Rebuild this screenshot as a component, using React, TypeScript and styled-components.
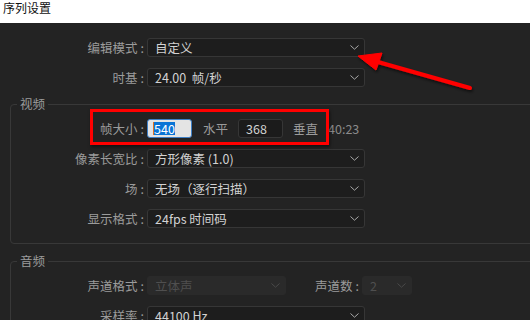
import React from "react";
import styled, { createGlobalStyle } from "styled-components";

const Global = createGlobalStyle`
  html, body {
    margin: 0;
    padding: 0;
    background: #232323;
  }
  body {
    font-family: "Noto Sans CJK SC", "Noto Sans", sans-serif;
  }
`;

const Window = styled.div`
  position: relative;
  width: 530px;
  height: 320px;
  overflow: hidden;
  background: #232323;
`;

const TitleBar = styled.div`
  height: 23px;
  background: #ffffff;
  color: #111;
  font-size: 12px;
  line-height: 16px;
  padding-left: 3px;
  box-sizing: border-box;
`;

const Panel = styled.div`
  padding-top: 15px;
`;

const Rows = styled.div<{ $top?: number }>`
  display: flex;
  flex-direction: column;
  gap: 11px;
  padding-top: ${(p) => p.$top ?? 0}px;
`;

const Row = styled.div`
  display: flex;
  align-items: center;
  height: 19px;
`;

const Label = styled.div<{ $w: number }>`
  width: ${(p) => p.$w}px;
  flex-shrink: 0;
  text-align: right;
  color: #9b9b9b;
  font-size: 12.5px;
  line-height: 19px;
  white-space: nowrap;
  margin-right: 3px;
`;

const Colon = styled.span`
  margin-left: 3px;
`;

const Select = styled.div<{ $w: number; $disabled?: boolean }>`
  box-sizing: border-box;
  width: ${(p) => p.$w}px;
  height: 19px;
  display: flex;
  align-items: center;
  justify-content: space-between;
  padding: 0 5px 0 7px;
  border-radius: 3px;
  background: ${(p) => (p.$disabled ? "#2a2a2a" : "#1d1d1d")};
  border: 1px solid ${(p) => (p.$disabled ? "#2a2a2a" : "#363636")};
  color: ${(p) => (p.$disabled ? "#4f4f4f" : "#d2d2d2")};
  font-size: 12.5px;
  white-space: pre;
`;

const Input = styled.div<{ $active?: boolean; $ml?: number }>`
  box-sizing: border-box;
  width: 45px;
  height: 19px;
  margin-left: ${(p) => p.$ml ?? 0}px;
  display: flex;
  align-items: center;
  padding-left: ${(p) => (p.$active ? 5 : 7)}px;
  border-radius: 3px;
  background: ${(p) => (p.$active ? "#e4e4e4" : "#1b1b1b")};
  border: 1px solid ${(p) => (p.$active ? "#3d7fc6" : "#363636")};
  color: #d2d2d2;
  font-size: 12.5px;
`;

const Selected = styled.span`
  background: #0a74d6;
  color: #ffffff;
  border-left: 1px solid #e07020;
  line-height: 13px;
`;

const Unit = styled.span<{ $ml: number; $color?: string }>`
  margin-left: ${(p) => p.$ml}px;
  color: ${(p) => p.$color ?? "#9b9b9b"};
  font-size: 12.5px;
  white-space: nowrap;
`;

const Group = styled.fieldset<{ $mt: number; $h: number }>`
  margin: ${(p) => p.$mt}px -30px 0 10px;
  padding: 0;
  border: 1px solid #383838;
  border-radius: 4px;
  min-width: 0;
  height: ${(p) => p.$h}px;
  box-sizing: border-box;
`;

const Legend = styled.legend`
  margin-left: 6px;
  padding: 0 3px;
  font-size: 12.5px;
  line-height: 16px;
  color: #9b9b9b;
`;

const RedBox = styled.div`
  position: absolute;
  left: 90px;
  top: 109px;
  width: 239px;
  height: 36px;
  box-sizing: border-box;
  border: 3px solid #ff0000;
  box-shadow: 1px 2px 3px rgba(0, 0, 0, 0.5);
`;

const Overlay = styled.svg`
  position: absolute;
  left: 0;
  top: 0;
  pointer-events: none;
`;

function Chevron({ color = "#a8a8a8" }: { color?: string }) {
  return (
    <svg width="9" height="5" viewBox="0 0 9 5">
      <polyline points="0.5,0.5 4.5,4.2 8.5,0.5" fill="none" stroke={color} strokeWidth="1" />
    </svg>
  );
}

function Field({ label, width, value, lw, disabled }: { label: string; width: number; value: string; lw: number; disabled?: boolean }) {
  return (
    <Row>
      <Label $w={lw}>
        {label}
        <Colon>:</Colon>
      </Label>
      <Select $w={width} $disabled={disabled}>
        <span>{value}</span>
        <Chevron color={disabled ? "#4a4a4a" : "#a8a8a8"} />
      </Select>
    </Row>
  );
}

export default function App() {
  return (
    <Window>
      <Global />
      <TitleBar>序列设置</TitleBar>
      <Panel>
        <Rows>
          <Field lw={144} label="编辑模式" width={218} value="自定义" />
          <Field lw={144} label="时基" width={218} value="24.00  帧/秒" />
        </Rows>

        <Group $mt={9} $h={148}>
          <Legend>视频</Legend>
          <Rows $top={7}>
            <Row>
              <Label $w={133}>
                帧大小
                <Colon>:</Colon>
              </Label>
              <Input $active>
                <Selected>540</Selected>
              </Input>
              <Unit $ml={11}>水平</Unit>
              <Input $ml={10}>368</Input>
              <Unit $ml={10}>垂直</Unit>
              <Unit $ml={10} $color="#8a8a8a">40:23</Unit>
            </Row>
            <Field lw={133} label="像素长宽比" width={218} value="方形像素 (1.0)" />
            <Field lw={133} label="场" width={218} value="无场（逐行扫描）" />
            <Field lw={133} label="显示格式" width={218} value="24fps 时间码" />
          </Rows>
        </Group>

        <Group $mt={9} $h={120}>
          <Legend>音频</Legend>
          <Rows $top={7}>
            <Row>
              <Label $w={133}>
                声道格式
                <Colon>:</Colon>
              </Label>
              <Select $w={139} $disabled>
                <span>立体声</span>
                <Chevron color="#4a4a4a" />
              </Select>
              <Label $w={73}>
                声道数
                <Colon>:</Colon>
              </Label>
              <Select $w={50} $disabled>
                <span>2</span>
                <Chevron color="#4a4a4a" />
              </Select>
            </Row>
            <Field lw={133} label="采样率" width={218} value="44100 Hz" />
          </Rows>
        </Group>
      </Panel>

      <RedBox />
      <Overlay width="530" height="320">
        <defs>
          <filter id="sh" x="-20%" y="-50%" width="140%" height="200%">
            <feDropShadow dx="1" dy="2" stdDeviation="1.5" floodColor="#000" floodOpacity="0.6" />
          </filter>
        </defs>
        <g filter="url(#sh)" fill="#ff0000" stroke="#ff0000">
          <line x1="470" y1="88" x2="378" y2="62" strokeWidth="4" strokeLinecap="round" />
          <polygon points="358,56 382,53 376,70" strokeWidth="1" strokeLinejoin="round" />
        </g>
      </Overlay>
    </Window>
  );
}
